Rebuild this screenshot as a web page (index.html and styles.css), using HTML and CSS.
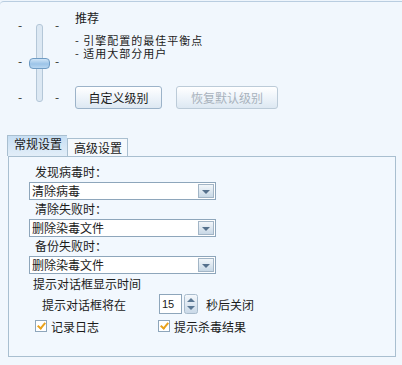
FILE: index.html
```html
<!DOCTYPE html>
<html lang="zh-CN">
<head>
    <meta charset="UTF-8">
    <title>杀毒设置</title>
    <link rel="stylesheet" href="styles.css">
</head>
<body>
    <div class="window">
        <div class="level">
            <div class="slider">
                <div class="ticks"><span>-</span><span>-</span><span>-</span></div>
                <div class="track">
                    <div class="thumb"></div>
                </div>
                <div class="ticks"><span>-</span><span>-</span><span>-</span></div>
            </div>
            <div class="level-info">
                <div class="level-name">推荐</div>
                <div class="level-desc">- 引擎配置的最佳平衡点<br>- 适用大部分用户</div>
                <div class="level-buttons">
                    <button class="btn">自定义级别</button>
                    <button class="btn" disabled>恢复默认级别</button>
                </div>
            </div>
        </div>

        <div class="tabs">
            <div class="tab active">常规设置</div>
            <div class="tab">高级设置</div>
        </div>
        <div class="panel">
            <div class="field-label">发现病毒时：</div>
            <div class="combo"><span class="combo-text">清除病毒</span><span class="combo-arrow"></span></div>
            <div class="field-label">清除失败时：</div>
            <div class="combo"><span class="combo-text">删除染毒文件</span><span class="combo-arrow"></span></div>
            <div class="field-label">备份失败时：</div>
            <div class="combo"><span class="combo-text">删除染毒文件</span><span class="combo-arrow"></span></div>

            <div class="group-label">提示对话框显示时间</div>
            <div class="timeout-row">
                <span class="timeout-label">提示对话框将在</span>
                <div class="spin">
                    <span class="spin-value">15</span>
                    <span class="spin-buttons">
                        <svg width="14" height="20" viewBox="0 0 14 20">
                            <defs>
                                <linearGradient id="sg" x1="0" y1="0" x2="0" y2="1">
                                    <stop offset="0" stop-color="#f4f8fc"/>
                                    <stop offset="1" stop-color="#c9d9e8"/>
                                </linearGradient>
                            </defs>
                            <rect x="0.5" y="0.5" width="13" height="19" rx="2" fill="url(#sg)" stroke="#a9bccd"/>
                            <path d="M3 8 L7 4 L11 8 Z" fill="#5b7894"/>
                            <path d="M3 12 L7 16 L11 12 Z" fill="#5b7894"/>
                        </svg>
                    </span>
                </div>
                <span class="timeout-unit">秒后关闭</span>
            </div>
            <div class="check-row">
                <label class="check"><span class="box"></span>记录日志</label>
                <label class="check second"><span class="box"></span>提示杀毒结果</label>
            </div>
        </div>
    </div>
</body>
</html>
```

FILE: styles.css
```css
body {
    margin: 0;
    padding: 0;
    background-color: #eef5fc;
    font-family: "Noto Sans CJK SC", "Liberation Sans", sans-serif;
    font-size: 12px;
    color: #1b1b1b;
}

.window {
    width: 402px;
    height: 365px;
    box-sizing: border-box;
    border-top: 1px solid #b9cde0;
    border-top-left-radius: 4px;
    margin-top: 1px;
    background-color: #f1f7fd;
    overflow: hidden;
}

/* level slider area */
.level {
    display: flex;
    height: 131px;
}

.slider {
    display: flex;
    margin-top: 16px;
    margin-left: 18px;
    height: 86px;
}

.ticks {
    display: flex;
    flex-direction: column;
    justify-content: space-between;
    width: 6px;
    line-height: 14px;
    color: #333;
}

.track {
    position: relative;
    width: 5px;
    margin: 6px 12px 2px 12px;
    background-color: #dce8f3;
    border: 1px solid #b4c7d8;
    border-radius: 3px;
}

.thumb {
    position: absolute;
    left: -8px;
    top: 33px;
    width: 19px;
    height: 9px;
    border: 1px solid #6f9cc4;
    border-radius: 4px;
    background: linear-gradient(#cfe4f7, #9cc4e8 55%, #b8d6f1);
}

.level-info {
    margin-left: 14px;
}

.level-name {
    margin-top: 9px;
    line-height: 14px;
}

.level-desc {
    margin-top: 9px;
    font-size: 11px;
    line-height: 13px;
    letter-spacing: 1px;
}

.level-buttons {
    display: flex;
    gap: 14px;
    margin-top: 26px;
}

.btn {
    height: 23px;
    padding: 0 12px;
    font-family: inherit;
    font-size: 12px;
    color: #1b1b1b;
    border: 1px solid #9cb3c9;
    border-radius: 3px;
    background: linear-gradient(#ffffff, #eef4fa 50%, #dde8f2);
}

.btn:first-child {
    width: 87px;
}

.btn[disabled] {
    width: 102px;
    color: #a8b2bc;
    border-color: #bccbd8;
}

/* tabs */
.tabs {
    display: flex;
    align-items: flex-end;
    margin-left: 7px;
    margin-top: 2px;
    height: 21px;
}

.tab {
    height: 17px;
    padding: 0 5px 0 6px;
    line-height: 17px;
    border: 1px solid #a9bfd0;
    border-bottom: none;
    background-color: #f5f9fd;
}

.tab.active {
    height: 20px;
    line-height: 15px;
    background: linear-gradient(#c6def3, #e3eef8);
    border-right: none;
}

.panel {
    margin-left: 8px;
    width: 388px;
    height: 201px;
    border: 1px solid #a9bfd0;
    background-color: #f2f8fe;
    box-sizing: border-box;
    padding: 6px 0 0 20px;
}

.field-label {
    margin-left: 6px;
    line-height: 18px;
    height: 19px;
}

.combo {
    display: flex;
    width: 187px;
    height: 18px;
    box-sizing: border-box;
    border: 1px solid #8ea6bb;
    background-color: #fff;
}

.combo-text {
    flex: 1;
    padding-left: 2px;
    line-height: 16px;
}

.combo-arrow {
    width: 14px;
    margin: 1px;
    border: 1px solid #a2b5c6;
    background: linear-gradient(#f2f6fa, #c8d8e6);
    position: relative;
}

.combo-arrow::after {
    content: "";
    position: absolute;
    left: 3px;
    top: 5px;
    border-left: 4px solid transparent;
    border-right: 4px solid transparent;
    border-top: 4px solid #55708c;
}

.group-label {
    margin-left: 4px;
    margin-top: 3px;
    line-height: 14px;
}

.timeout-row {
    display: flex;
    align-items: center;
    margin-top: 2px;
    height: 22px;
}

.timeout-label {
    margin-left: 13px;
    width: 117px;
}

.spin {
    display: flex;
    align-items: center;
}

.spin-value {
    width: 23px;
    height: 20px;
    box-sizing: border-box;
    border: 1px solid #8ea6bb;
    background-color: #fff;
    padding-left: 2px;
    line-height: 18px;
    font-family: "Liberation Sans", sans-serif;
    font-size: 11px;
}

.spin-buttons {
    margin-left: 2px;
    display: flex;
}

.timeout-unit {
    margin-left: 8px;
}

.check-row {
    display: flex;
    margin-top: 3px;
    height: 16px;
    align-items: center;
}

.check {
    display: flex;
    align-items: center;
    width: 123px;
    margin-left: 6px;
}

.check.second {
    margin-left: 0;
}

.box {
    position: relative;
    width: 12px;
    height: 12px;
    box-sizing: border-box;
    border: 1px solid #8ea6bb;
    background-color: #fff;
    margin-right: 4px;
}

.box::after {
    content: "";
    position: absolute;
    left: 3px;
    top: 0px;
    width: 3px;
    height: 6px;
    border-right: 2px solid #e9a21c;
    border-bottom: 2px solid #e9a21c;
    transform: rotate(40deg);
}
```
